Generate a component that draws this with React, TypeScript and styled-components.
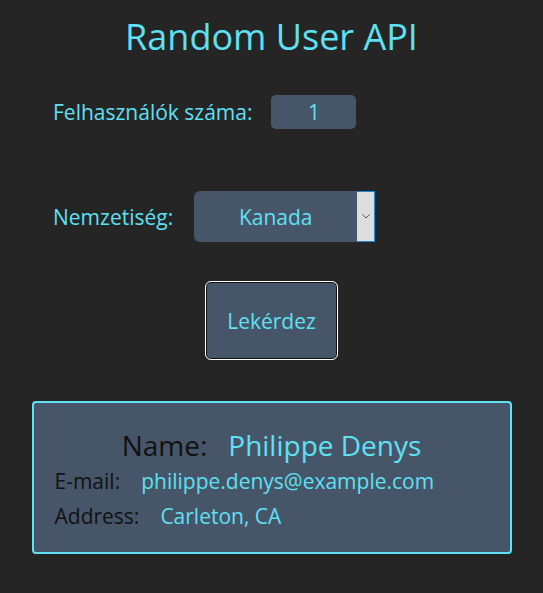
import { useState } from "react";
import styled, { createGlobalStyle } from "styled-components";

const GlobalStyle = createGlobalStyle`
  body {
    margin: 0;
    background-color: #252525;
    font-family: "Open Sans", "Noto Sans", sans-serif;
  }
`;

const Wrapper = styled.div`
  width: 543px;
  min-height: 593px;
  display: flex;
  flex-direction: column;
  align-items: center;
  color: #5ee1f3;
`;

const Title = styled.h1`
  margin: 14px 0 0;
  font-size: 36px;
  font-weight: 400;
  line-height: 46px;
`;

const Row = styled.div<{ $top: number }>`
  align-self: stretch;
  display: flex;
  align-items: center;
  gap: 19px;
  margin-top: ${(p) => p.$top}px;
  padding-left: 53px;
`;

const Label = styled.label`
  font-size: 21px;
`;

const NumberInput = styled.input`
  box-sizing: border-box;
  width: 85px;
  height: 34px;
  border: none;
  border-radius: 5px;
  background-color: #475569;
  color: #5ee1f3;
  font-family: inherit;
  font-size: 21px;
  text-align: center;
  outline: none;
`;

const SelectBox = styled.div`
  display: flex;
  height: 51px;
  margin-left: 2px;
`;

const Select = styled.select`
  appearance: none;
  width: 163px;
  border: none;
  border-radius: 6px 0 0 6px;
  background-color: #475569;
  color: #5ee1f3;
  font-family: inherit;
  font-size: 21px;
  text-align: center;
  text-align-last: center;
  outline: none;
`;

const Arrow = styled.div`
  box-sizing: border-box;
  width: 18px;
  display: flex;
  align-items: center;
  justify-content: center;
  background-color: #dddddd;
  border: 1px solid #1e88d8;
  border-left: none;
`;

const Button = styled.button`
  margin-top: 39px;
  width: 133px;
  height: 79px;
  border: 1px solid #ffffff;
  border-radius: 6px;
  box-shadow: inset 0 0 0 1px #111;
  background-color: #475569;
  color: #5ee1f3;
  font-family: inherit;
  font-size: 21px;
  cursor: pointer;
`;

const Card = styled.div`
  box-sizing: border-box;
  margin-top: 41px;
  width: 480px;
  height: 153px;
  padding: 23px 21px 0;
  border: 2px solid #5ee1f3;
  border-radius: 4px;
  background-color: #475569;
`;

const NameRow = styled.div`
  display: flex;
  justify-content: center;
  gap: 21px;
  font-size: 28px;
  line-height: 38px;
`;

const InfoRow = styled.div`
  display: flex;
  gap: 21px;
  font-size: 21px;
  line-height: 35px;
`;

const Key = styled.span`
  color: #111111;
`;

const Value = styled.span`
  color: #5ee1f3;
`;

export default function App() {
  const [count, setCount] = useState("1");
  const [nat, setNat] = useState("CA");
  return (
    <Wrapper>
      <GlobalStyle />
      <Title>Random User API</Title>
      <Row $top={35}>
        <Label>Felhasználók száma:</Label>
        <NumberInput value={count} onChange={(e) => setCount(e.target.value)} />
      </Row>
      <Row $top={62}>
        <Label>Nemzetiség:</Label>
        <SelectBox>
          <Select value={nat} onChange={(e) => setNat(e.target.value)}>
            <option value="CA">Kanada</option>
            <option value="US">USA</option>
            <option value="GB">Egyesült Királyság</option>
          </Select>
          <Arrow>
            <svg width="8" height="5" viewBox="0 0 8 5">
              <path d="M0.5 0.5 L4 4 L7.5 0.5" fill="none" stroke="#555" strokeWidth="1" />
            </svg>
          </Arrow>
        </SelectBox>
      </Row>
      <Button>Lekérdez</Button>
      <Card>
        <NameRow>
          <Key>Name:</Key>
          <Value>Philippe Denys</Value>
        </NameRow>
        <InfoRow>
          <Key>E-mail:</Key>
          <Value>philippe.denys@example.com</Value>
        </InfoRow>
        <InfoRow>
          <Key>Address:</Key>
          <Value>Carleton, CA</Value>
        </InfoRow>
      </Card>
    </Wrapper>
  );
}
